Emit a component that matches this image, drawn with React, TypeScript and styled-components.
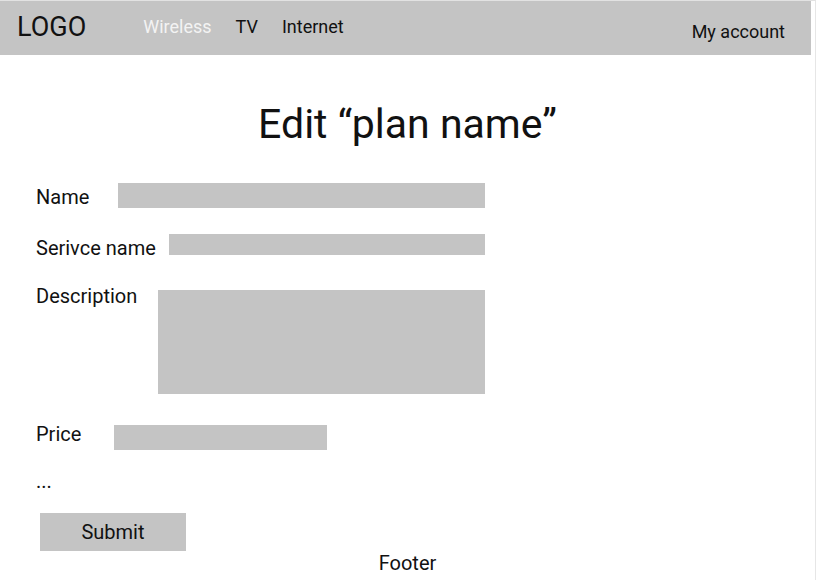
import * as React from "react";
import styled, { createGlobalStyle } from "styled-components";

const GlobalStyle = createGlobalStyle`
  body {
    margin: 0;
    background: #ffffff;
    font-family: Roboto, "Liberation Sans", sans-serif;
    color: #111111;
  }
`;

const Page = styled.div`
  width: 815px;
  height: 579px;
  border-top: 1px solid #e2e2e2;
  border-right: 1px solid #e6e6e6;
  display: flex;
  flex-direction: column;
  overflow: hidden;
`;

const Header = styled.header`
  height: 54px;
  margin-right: 4px;
  background: #c4c4c4;
  display: flex;
  align-items: flex-start;
  padding: 0 26px 0 17px;
`;

const Logo = styled.div`
  font-size: 27px;
  margin-top: 10px;
`;

const Nav = styled.nav`
  display: flex;
  gap: 24px;
  margin-left: 57px;
  margin-top: 15px;
`;

const NavItem = styled.a<{ $active?: boolean }>`
  font-size: 18px;
  color: ${(p) => (p.$active ? "#f3f3f3" : "#111111")};
  text-decoration: none;
`;

const Account = styled.a`
  margin-left: auto;
  margin-top: 20px;
  font-size: 18px;
  color: #111111;
  text-decoration: none;
`;

const Title = styled.h1`
  margin: 45px 0 0;
  text-align: center;
  font-size: 41px;
  font-weight: 400;
`;

const Form = styled.form`
  display: flex;
  flex-direction: column;
  padding-left: 36px;
`;

const Row = styled.div<{ $mt: number }>`
  display: flex;
  align-items: flex-start;
  margin-top: ${(p) => p.$mt}px;
`;

const Label = styled.label<{ $width: number; $mt?: number }>`
  width: ${(p) => p.$width}px;
  flex: none;
  margin-top: ${(p) => p.$mt ?? 0}px;
  font-size: 20px;
  white-space: nowrap;
`;

const Field = styled.div<{ $width: number; $height: number; $mt?: number }>`
  width: ${(p) => p.$width}px;
  height: ${(p) => p.$height}px;
  margin-top: ${(p) => p.$mt ?? 0}px;
  background: #c4c4c4;
`;

const More = styled.div`
  margin-top: 19px;
  font-size: 20px;
`;

const SubmitButton = styled.button`
  width: 146px;
  height: 38px;
  margin: 20px 0 0 4px;
  border: none;
  background: #c4c4c4;
  font-family: Roboto, "Liberation Sans", sans-serif;
  font-size: 20px;
  color: #111111;
  padding: 0;
`;

const Footer = styled.footer`
  text-align: center;
  font-size: 20px;
`;

const App = () => {
  return (
    <Page>
      <GlobalStyle />
      <Header>
        <Logo>LOGO</Logo>
        <Nav>
          <NavItem $active>Wireless</NavItem>
          <NavItem>TV</NavItem>
          <NavItem>Internet</NavItem>
        </Nav>
        <Account>My account</Account>
      </Header>
      <Title>Edit “plan name”</Title>
      <Form onSubmit={(e) => e.preventDefault()}>
        <Row $mt={34.5}>
          <Label $width={82} $mt={2}>Name</Label>
          <Field $width={367} $height={25} />
        </Row>
        <Row $mt={25}>
          <Label $width={133} $mt={2}>Serivce name</Label>
          <Field $width={316} $height={21} />
        </Row>
        <Row $mt={24}>
          <Label $width={122}>Description</Label>
          <Field $width={327} $height={104} $mt={6} />
        </Row>
        <Row $mt={28}>
          <Label $width={78}>Price</Label>
          <Field $width={213} $height={25} $mt={3} />
        </Row>
        <More>...</More>
        <div>
          <SubmitButton type="submit">Submit</SubmitButton>
        </div>
      </Form>
      <Footer>Footer</Footer>
    </Page>
  );
};

export default App;
